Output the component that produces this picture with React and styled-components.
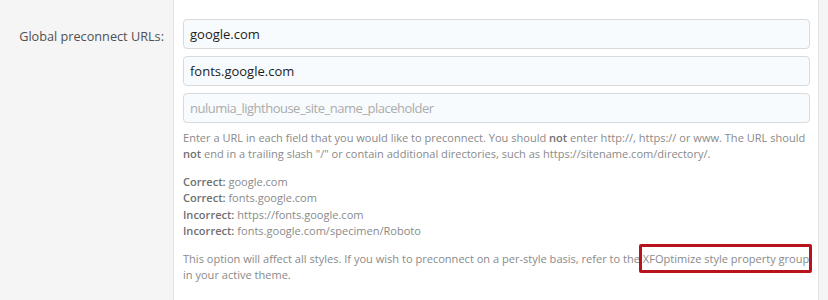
import styled, { createGlobalStyle } from "styled-components"

const GlobalStyle = createGlobalStyle`
    html, body {
        margin: 0;
        padding: 0;
        background: #f5f5f5;
    }
    body {
        font-family: "Open Sans", "Noto Sans", sans-serif;
    }
`

const Page = styled.div`
    display: flex;
    width: 828px;
    height: 300px;
    overflow: hidden;
`

const LabelCol = styled.div`
    width: 174px;
    flex-shrink: 0;
    border-right: 1px solid #e3e3e3;
    background: #f5f5f5;
    box-sizing: border-box;
    padding: 24px 9px 0 0;
    text-align: right;
`

const Label = styled.label`
    font-size: 12.7px;
    color: #505050;
`

const Content = styled.div`
    width: 645px;
    flex-shrink: 0;
    background: #fff;
    border-right: 1px solid #e3e3e3;
    box-sizing: border-box;
    padding: 19px 8px 0 9px;
`

const Inputs = styled.div`
    display: flex;
    flex-direction: column;
    gap: 7px;
`

const Input = styled.input`
    display: block;
    width: 100%;
    height: 30px;
    box-sizing: border-box;
    padding: 0 6px;
    font-family: inherit;
    font-size: 13px;
    color: #1d1d1d;
    background: #f8fbfd;
    border: 1px solid #d8dadc;
    border-radius: 4px;
    outline: none;

    &::placeholder {
        color: #ababab;
        letter-spacing: -0.5px;
    }
`

const Hint = styled.div`
    margin-top: 7px;
    font-size: 11.05px;
    line-height: 16.3px;
    color: #8a8a8a;

    p {
        margin: 0 0 11.5px;
    }

    b {
        font-weight: 600;
        color: #707070;
    }
`

const Highlight = styled.span`
    position: relative;
    white-space: nowrap;

    &::after {
        content: "";
        position: absolute;
        left: -4px;
        right: -3px;
        top: -7px;
        bottom: -7px;
        border: 3px solid #b8121c;
        border-radius: 2px;
    }
`

const App = () => {
    return (
        <Page>
            <GlobalStyle />
            <LabelCol>
                <Label htmlFor="preconnect-0">Global preconnect URLs:</Label>
            </LabelCol>
            <Content>
                <Inputs>
                    <Input id="preconnect-0" type="text" defaultValue="google.com" />
                    <Input type="text" defaultValue="fonts.google.com" />
                    <Input type="text" placeholder="nulumia_lighthouse_site_name_placeholder" />
                </Inputs>
                <Hint>
                    <p>
                        Enter a URL in each field that you would like to preconnect. You should <b>not</b> enter http://, https:// or www. The URL should <b>not</b> end in a trailing slash "/" or contain additional directories, such as https://sitename.com/directory/.
                    </p>
                    <p>
                        <b>Correct:</b> google.com<br />
                        <b>Correct:</b> fonts.google.com<br />
                        <b>Incorrect:</b> https://fonts.google.com<br />
                        <b>Incorrect:</b> fonts.google.com/specimen/Roboto
                    </p>
                    <p>
                        This option will affect all styles. If you wish to preconnect on a per-style basis, refer to the <Highlight>XFOptimize style property group</Highlight> in your active theme.
                    </p>
                </Hint>
            </Content>
        </Page>
    )
}

export default App
